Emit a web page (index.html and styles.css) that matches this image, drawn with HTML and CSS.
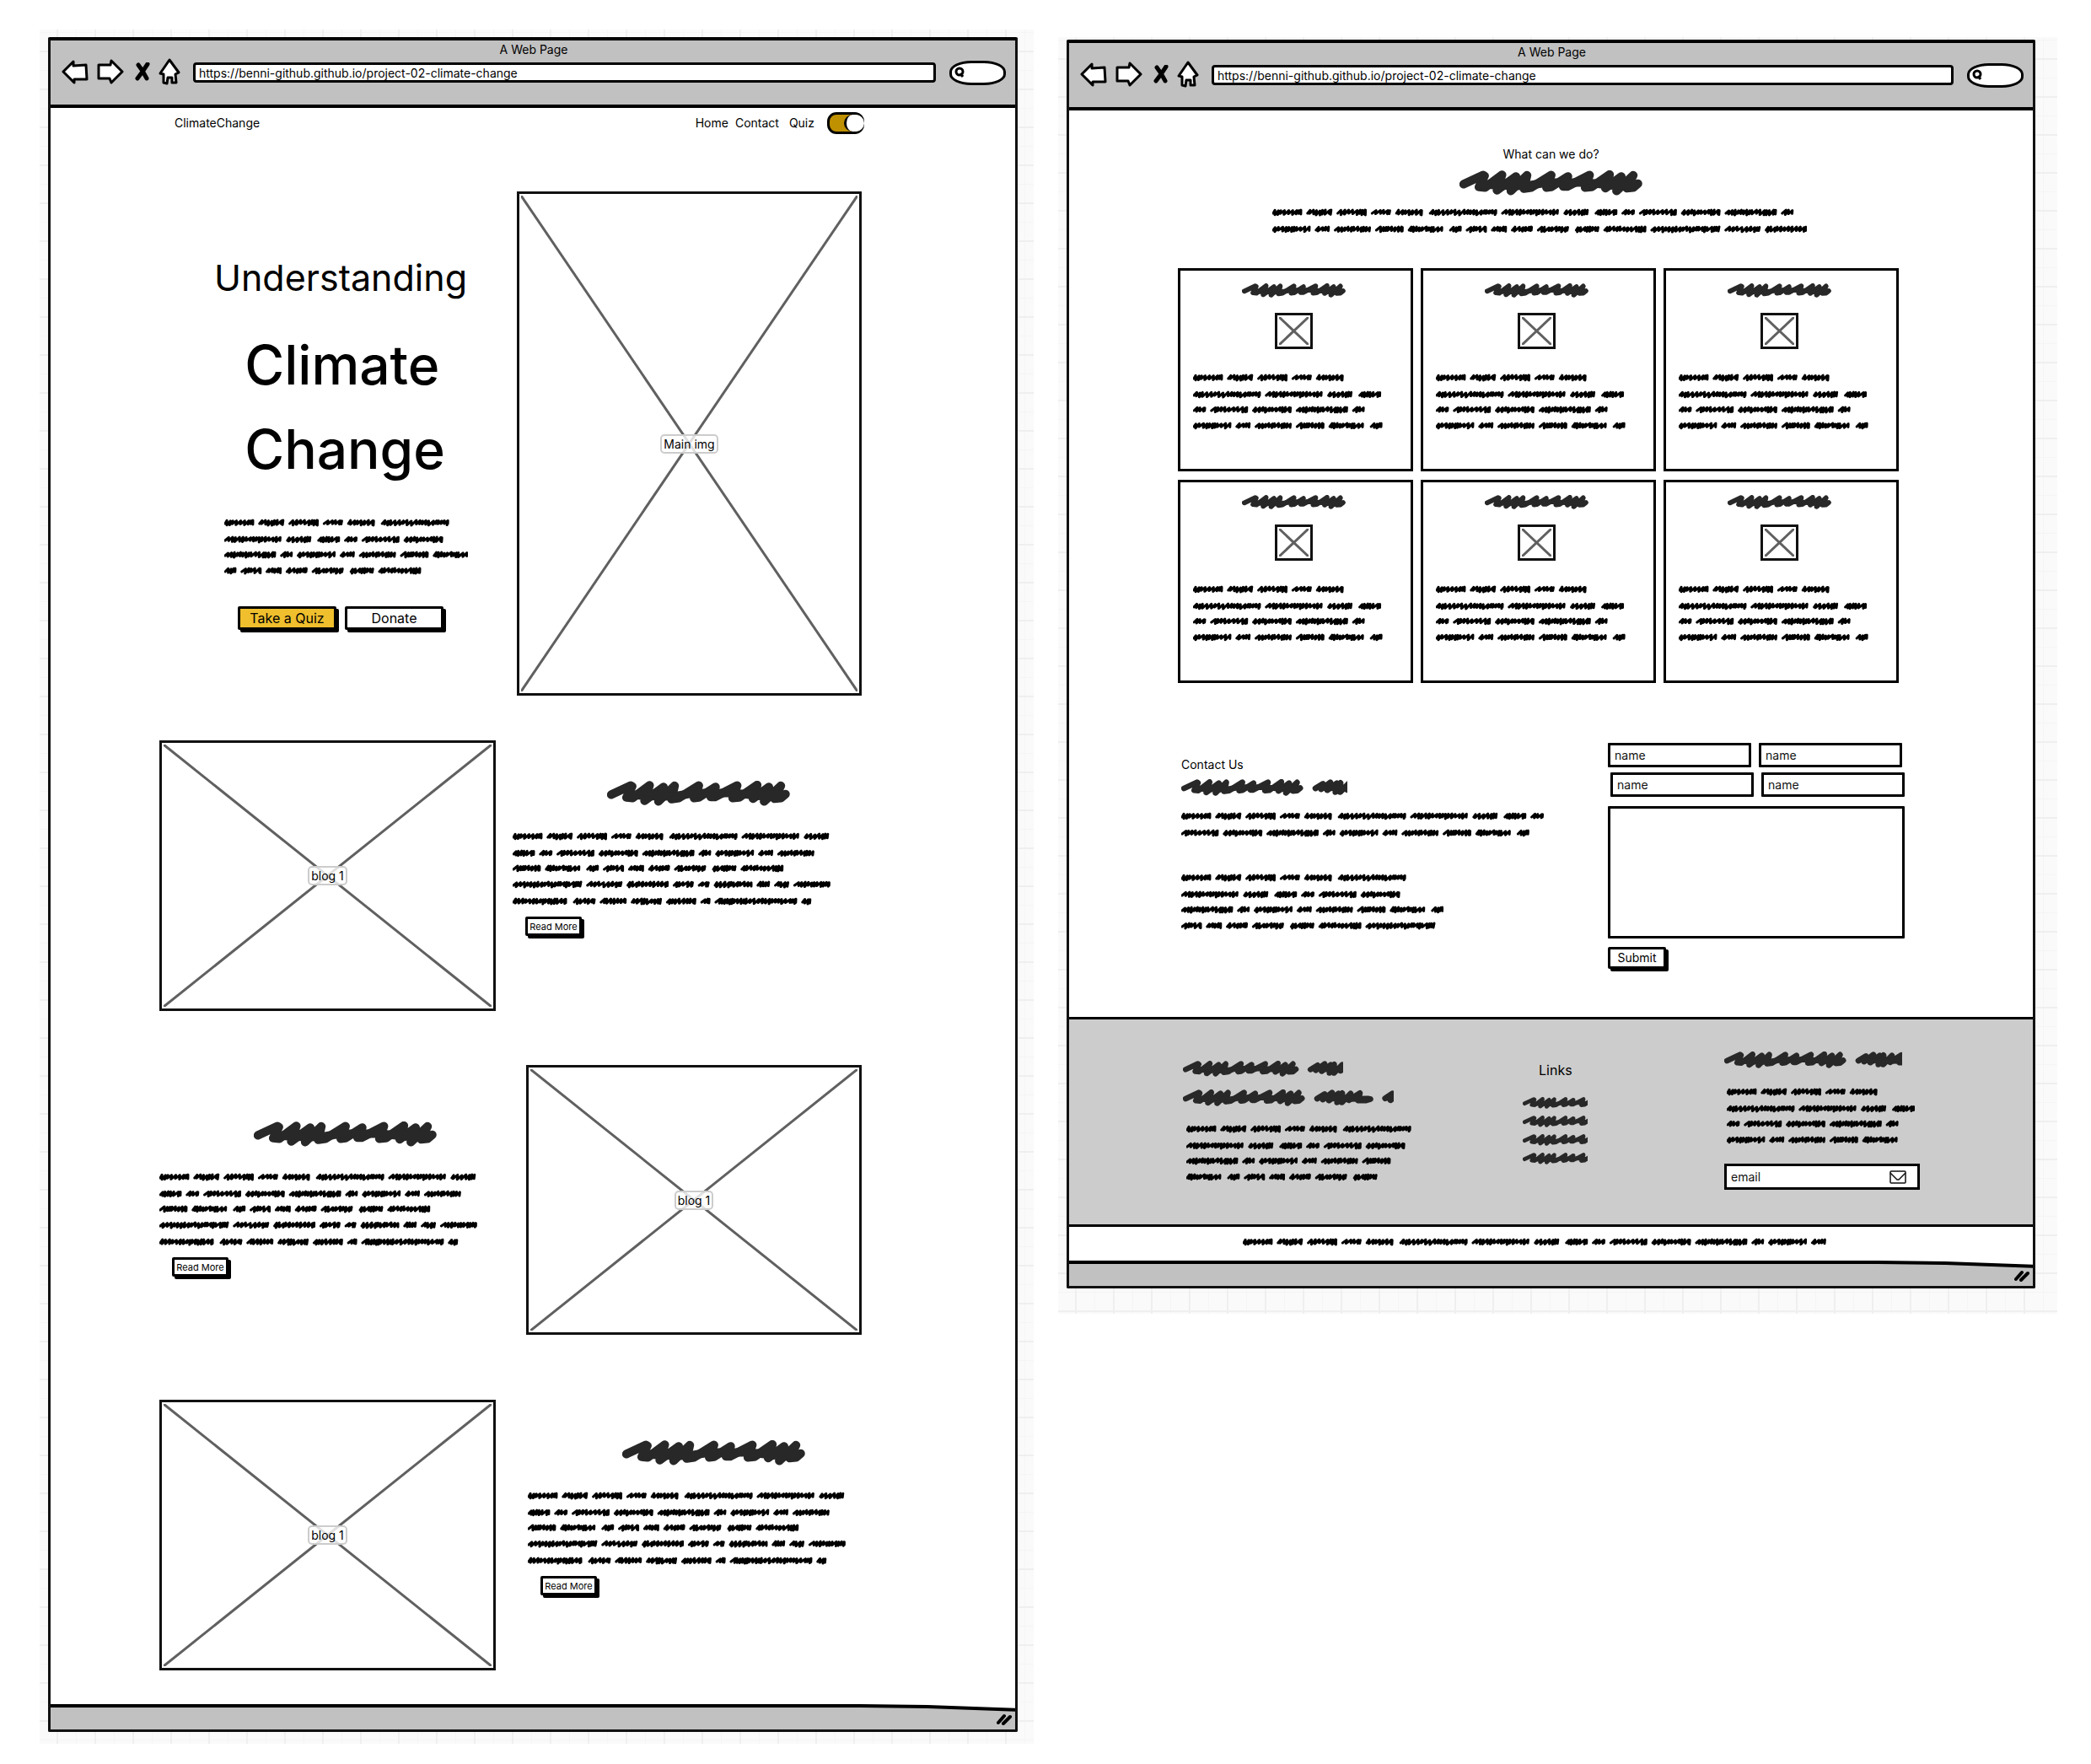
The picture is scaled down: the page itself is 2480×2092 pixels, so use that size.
FILE: index.html
```html
<!DOCTYPE html>
<html lang="en">
<head>
<meta charset="utf-8">
<meta name="viewport" content="width=device-width, initial-scale=1">
<title>Climate Change wireframe</title>
<link rel="stylesheet" href="styles.css">
</head>
<body>
<svg class="defs" aria-hidden="true">
  <defs>
    <g id="heading-ink" fill="none" stroke="#282828" stroke-width="31" stroke-linecap="round" stroke-linejoin="round">
      <path d="M15 50L85 17L90 20L70 60L92 62L153 16L135 72L203 22L185 74L243 18L232 66L258 62L330 17L313 62L330 60L390 22L373 58L388 58L468 17L452 62L475 60L540 15L525 64L582 22L565 74L625 18L602 64L625 62L642 48"/>
      <path d="M724 50L765 25L755 55L805 17L788 60L840 22L832 70L860 20L858 70L905 22L895 58L955 20L945 60L985 60L1012 52"/>
      <path d="M1091 48L1130 22L1120 58L1180 20L1160 60"/>
      <path d="M82 48L130 54L240 56L300 46L340 44L440 44L500 48L540 54L630 50M750 46L800 48L860 52L1000 50M1105 46L1170 48"/>
    </g>
    <symbol id="icon-back" viewBox="0 0 32 30"><path d="M2 15L14 3V8L29 7L30 24H15V28Z" fill="#fff" stroke="#000" stroke-width="3" stroke-linejoin="round"/></symbol>
    <symbol id="icon-forward" viewBox="0 0 32 30"><path d="M30 15L17 28L15 23H2V7H16L17 2Z" fill="#fff" stroke="#000" stroke-width="3" stroke-linejoin="round"/></symbol>
    <symbol id="icon-stop" viewBox="0 0 18 22"><path d="M4 3L9 10L14 19M15 2L9 11L3 19" fill="none" stroke="#000" stroke-width="5" stroke-linejoin="round" stroke-linecap="round"/></symbol>
    <symbol id="icon-home" viewBox="0 0 26 32"><path d="M13 2L24 17L20 19L21 29H16V23H11L10 30L6 29V19L2 18Z" fill="#fff" stroke="#000" stroke-width="3" stroke-linejoin="round"/></symbol>
    <symbol id="icon-search" viewBox="0 0 12 14"><circle cx="6" cy="6" r="4" fill="none" stroke="#000" stroke-width="3"/><path d="M7 8L10 12" stroke="#000" stroke-width="3"/></symbol>
    <symbol id="icon-mail" viewBox="0 0 20 16"><rect x="1" y="1" width="18" height="14" rx="1" fill="#fff" stroke="#111" stroke-width="1.5"/><path d="M1 3L9 11H11L19 3" fill="none" stroke="#111" stroke-width="1.5"/></symbol>
    <symbol id="icon-grip" viewBox="0 0 20 14"><path d="M3 11L10 3M9 12L17 4" stroke="#000" stroke-width="4" stroke-linecap="round"/></symbol>
  </defs>
</svg>

<section class="board board-home">
  <div class="window">
    <header class="chrome">
      <p class="chrome-title">A Web Page</p>
      <div class="chrome-bar">
        <button class="tool" type="button" aria-label="Back"><svg width="32" height="30"><use href="#icon-back"/></svg></button>
        <button class="tool" type="button" aria-label="Forward"><svg width="32" height="30"><use href="#icon-forward"/></svg></button>
        <button class="tool" type="button" aria-label="Stop"><svg width="18" height="22"><use href="#icon-stop"/></svg></button>
        <button class="tool" type="button" aria-label="Home"><svg width="26" height="32"><use href="#icon-home"/></svg></button>
        <input class="address" type="text" aria-label="Address" value="https://benni-github.github.io/project-02-climate-change">
        <label class="search" aria-label="Search"><svg width="12" height="14"><use href="#icon-search"/></svg><input type="search"></label>
      </div>
    </header>

    <nav class="site-nav">
      <a class="brand" href="#">ClimateChange</a>
      <a href="#">Home</a>
      <a href="#contact">Contact</a>
      <a class="quiz-link" href="#">Quiz</a>
      <input class="toggle" type="checkbox" aria-label="Theme" checked>
    </nav>

    <main class="home">
      <section class="hero">
        <div class="hero-text">
          <p class="kicker">Understanding</p>
          <h1>Climate<br>Change</h1>
          <p class="copy" data-lines="6,6,7,7"></p>
          <div class="actions">
            <button class="btn btn-large btn-gold" type="button">Take a Quiz</button>
            <button class="btn btn-large" type="button">Donate</button>
          </div>
        </div>
        <figure class="picture picture-main">
          <svg class="cross"><line x1="0" y1="0" x2="100%" y2="100%"/><line x1="100%" y1="0" x2="0" y2="100%"/></svg>
          <figcaption>Main img</figcaption>
        </figure>
      </section>

      <article class="post">
        <figure class="picture">
          <svg class="cross"><line x1="0" y1="0" x2="100%" y2="100%"/><line x1="100%" y1="0" x2="0" y2="100%"/></svg>
          <figcaption>blog 1</figcaption>
        </figure>
        <div class="post-text">
          <svg class="ink ink-xl" viewBox="0 0 658 91"><use href="#heading-ink"/></svg>
          <p class="copy" data-lines="8,9,9,9,8"></p>
          <button class="btn btn-small" type="button">Read More</button>
        </div>
      </article>

      <article class="post post-flip">
        <div class="post-text">
          <svg class="ink ink-xl" viewBox="0 0 658 91"><use href="#heading-ink"/></svg>
          <p class="copy" data-lines="8,9,9,9,8"></p>
          <button class="btn btn-small" type="button">Read More</button>
        </div>
        <figure class="picture">
          <svg class="cross"><line x1="0" y1="0" x2="100%" y2="100%"/><line x1="100%" y1="0" x2="0" y2="100%"/></svg>
          <figcaption>blog 1</figcaption>
        </figure>
      </article>

      <article class="post post-wide">
        <figure class="picture">
          <svg class="cross"><line x1="0" y1="0" x2="100%" y2="100%"/><line x1="100%" y1="0" x2="0" y2="100%"/></svg>
          <figcaption>blog 1</figcaption>
        </figure>
        <div class="post-text">
          <svg class="ink ink-xl" viewBox="0 0 658 91"><use href="#heading-ink"/></svg>
          <p class="copy" data-lines="8,9,9,9,8"></p>
          <button class="btn btn-small" type="button">Read More</button>
        </div>
      </article>
    </main>

    <div class="status">
      <svg class="status-edge" viewBox="0 0 1144 30" preserveAspectRatio="none"><path d="M-4 2L960 2L1040 3L1148 7V34H-4Z"/></svg>
      <svg class="grip" width="20" height="14"><use href="#icon-grip"/></svg>
    </div>
  </div>
</section>

<section class="board board-action">
  <div class="window">
    <header class="chrome">
      <p class="chrome-title">A Web Page</p>
      <div class="chrome-bar">
        <button class="tool" type="button" aria-label="Back"><svg width="32" height="30"><use href="#icon-back"/></svg></button>
        <button class="tool" type="button" aria-label="Forward"><svg width="32" height="30"><use href="#icon-forward"/></svg></button>
        <button class="tool" type="button" aria-label="Stop"><svg width="18" height="22"><use href="#icon-stop"/></svg></button>
        <button class="tool" type="button" aria-label="Home"><svg width="26" height="32"><use href="#icon-home"/></svg></button>
        <input class="address" type="text" aria-label="Address" value="https://benni-github.github.io/project-02-climate-change">
        <label class="search" aria-label="Search"><svg width="12" height="14"><use href="#icon-search"/></svg><input type="search"></label>
      </div>
    </header>

    <main class="action">
      <section class="intro">
        <h2 class="label">What can we do?</h2>
        <svg class="ink ink-xl" viewBox="0 0 658 91"><use href="#heading-ink"/></svg>
        <p class="copy" data-lines="14,15"></p>
      </section>

      <section class="cards">
        <article class="card"><svg class="ink ink-s" viewBox="0 0 658 91"><use href="#heading-ink"/></svg><div class="thumb"><svg class="cross"><line x1="0" y1="0" x2="100%" y2="100%"/><line x1="100%" y1="0" x2="0" y2="100%"/></svg></div><p class="copy" data-lines="5,4,5,6"></p></article>
        <article class="card"><svg class="ink ink-s" viewBox="0 0 658 91"><use href="#heading-ink"/></svg><div class="thumb"><svg class="cross"><line x1="0" y1="0" x2="100%" y2="100%"/><line x1="100%" y1="0" x2="0" y2="100%"/></svg></div><p class="copy" data-lines="5,4,5,6"></p></article>
        <article class="card"><svg class="ink ink-s" viewBox="0 0 658 91"><use href="#heading-ink"/></svg><div class="thumb"><svg class="cross"><line x1="0" y1="0" x2="100%" y2="100%"/><line x1="100%" y1="0" x2="0" y2="100%"/></svg></div><p class="copy" data-lines="5,4,5,6"></p></article>
        <article class="card"><svg class="ink ink-s" viewBox="0 0 658 91"><use href="#heading-ink"/></svg><div class="thumb"><svg class="cross"><line x1="0" y1="0" x2="100%" y2="100%"/><line x1="100%" y1="0" x2="0" y2="100%"/></svg></div><p class="copy" data-lines="5,4,5,6"></p></article>
        <article class="card"><svg class="ink ink-s" viewBox="0 0 658 91"><use href="#heading-ink"/></svg><div class="thumb"><svg class="cross"><line x1="0" y1="0" x2="100%" y2="100%"/><line x1="100%" y1="0" x2="0" y2="100%"/></svg></div><p class="copy" data-lines="5,4,5,6"></p></article>
        <article class="card"><svg class="ink ink-s" viewBox="0 0 658 91"><use href="#heading-ink"/></svg><div class="thumb"><svg class="cross"><line x1="0" y1="0" x2="100%" y2="100%"/><line x1="100%" y1="0" x2="0" y2="100%"/></svg></div><p class="copy" data-lines="5,4,5,6"></p></article>
      </section>

      <section class="contact" id="contact">
        <div class="contact-text">
          <h2 class="label">Contact Us</h2>
          <svg class="ink ink-m" viewBox="0 0 897 91"><use href="#heading-ink"/></svg>
          <p class="copy" data-lines="10,10"></p>
          <p class="copy" data-lines="6,6,8,7"></p>
        </div>
        <form class="contact-form">
          <div class="field-row">
            <input class="field" type="text" aria-label="First name" placeholder="name">
            <input class="field" type="text" aria-label="Last name" placeholder="name">
          </div>
          <div class="field-row">
            <input class="field" type="text" aria-label="Middle name" placeholder="name">
            <input class="field" type="text" aria-label="Nickname" placeholder="name">
          </div>
          <textarea class="field message" aria-label="Message"></textarea>
          <button class="btn btn-submit" type="button">Submit</button>
        </form>
      </section>
    </main>

    <footer class="site-footer">
      <div class="about">
        <svg class="ink ink-sm" viewBox="0 0 909 91"><use href="#heading-ink"/></svg>
        <svg class="ink ink-m" viewBox="0 0 1139 91"><use href="#heading-ink"/></svg>
        <p class="copy" data-lines="6,6,6,7"></p>
      </div>
      <nav class="links">
        <h2>Links</h2>
        <ul>
          <li><a href="#" aria-label="Link one"><svg class="ink ink-xs" viewBox="0 0 500 91"><use href="#heading-ink"/></svg></a></li>
          <li><a href="#" aria-label="Link two"><svg class="ink ink-xs" viewBox="0 0 500 91"><use href="#heading-ink"/></svg></a></li>
          <li><a href="#" aria-label="Link three"><svg class="ink ink-xs" viewBox="0 0 500 91"><use href="#heading-ink"/></svg></a></li>
          <li><a href="#" aria-label="Link four"><svg class="ink ink-xs" viewBox="0 0 500 91"><use href="#heading-ink"/></svg></a></li>
        </ul>
      </nav>
      <div class="subscribe">
        <svg class="ink ink-m" viewBox="0 0 962 91"><use href="#heading-ink"/></svg>
        <p class="copy" data-lines="5,4,5,5"></p>
        <label class="email"><input type="email" aria-label="Email" placeholder="email"><svg width="20" height="16"><use href="#icon-mail"/></svg></label>
      </div>
    </footer>
    <div class="legal"><p class="copy" data-lines="16"></p></div>

    <div class="status">
      <svg class="status-edge" viewBox="0 0 1144 30" preserveAspectRatio="none"><path d="M-4 2L960 2L1040 3L1148 7V34H-4Z"/></svg>
      <svg class="grip" width="20" height="14"><use href="#icon-grip"/></svg>
    </div>
  </div>
</section>
<script src="scribble.js"></script>
</body>
</html>
```
FILE: styles.css
```css
* { box-sizing: border-box; }

body {
  margin: 0;
  padding: 35px 40px 24px 47px;
  display: grid;
  grid-template-columns: 1179fr 1185fr;
  column-gap: 29px;
  align-items: start;
  background: #fff;
  color: #000;
  font: 14px/20px Inter, "Noto Sans", sans-serif;
}

h1, h2, p, ul, figure { margin: 0; padding: 0; }
ul { list-style: none; }
a { color: inherit; text-decoration: none; }
svg { display: block; }
button, input, textarea { font: inherit; color: inherit; }
.defs { position: absolute; width: 0; height: 0; }

/* Graph paper behind each window */
.board {
  background-color: #fafafa;
  background-image:
    linear-gradient(#efefef 2px, transparent 2px),
    linear-gradient(90deg, #efefef 2px, transparent 2px),
    linear-gradient(#f5f5f5 1px, transparent 1px),
    linear-gradient(90deg, #f5f5f5 1px, transparent 1px);
  background-size: 45px 45px;
  background-position: 0 25px, 20px 0, 0 3px, 43px 0;
}
.board-home { padding: 9px 19px 14px 10px; }
.board-action { margin-top: 9px; padding: 3px 26px 30px 10px; }

.window {
  border: 3px solid #111;
  border-top: 4px solid #000;
  border-radius: 2px;
  background: #fff;
}

/* Browser chrome */
.chrome {
  padding: 1px 11px 24px 13px;
  border-bottom: 4px solid #000;
  background: #c1c1c1;
}
.chrome-title { text-align: center; }
.chrome-bar { display: flex; align-items: center; height: 31px; }
.tool { flex: none; margin-right: 10px; padding: 0; border: 0; background: none; }
.tool:nth-child(2) { margin-right: 13px; }
.tool:nth-child(4) { margin-right: 15px; }
.address {
  flex: 1;
  min-width: 0;
  height: 24px;
  margin: 3px 16px 0 0;
  padding: 0 4px;
  border: 3px solid #000;
  border-radius: 4px;
  background: #fff;
}
.search {
  display: flex;
  align-items: center;
  width: 67px;
  height: 29px;
  margin-top: 3px;
  padding-left: 3px;
  border: 3px solid #000;
  border-radius: 26px / 13px;
  background: #fff;
}
.search input { width: 40px; padding: 0; border: 0; background: none; outline: 0; }

.status { position: relative; height: 30px; }
.status-edge { width: 100%; height: 30px; }
.status-edge path { fill: #c1c1c1; stroke: #000; stroke-width: 4px; vector-effect: non-scaling-stroke; }
.grip { position: absolute; right: 3px; bottom: 5px; }

/* Scribbled headings */
.ink-xl { height: 30px; }
.ink-m { height: 20px; }
.ink-sm { height: 19px; }
.ink-s { height: 17px; }
.ink-xs { height: 14px; }

/* Buttons */
.btn {
  padding: 0;
  border: 3px solid #000;
  border-radius: 2px;
  box-shadow: 3px 3px 0 #000;
  background: #fff;
  line-height: 18px;
}
.btn-large { width: 117px; height: 28px; font-size: 16px; line-height: 20px; }
.btn-gold { background: #efbf2d; }
.btn-small { width: 67px; height: 23px; font-size: 11px; line-height: 16px; }
.btn-submit { width: 69px; height: 26px; }

/* Picture placeholders */
.picture {
  display: grid;
  place-items: center;
  aspect-ratio: 399 / 321;
  padding: 2px;
  border: 3px solid #111;
}
.picture-main { aspect-ratio: 409 / 598; }
.picture > * { grid-area: 1 / 1; }
.cross { width: 100%; height: 100%; }
.cross line { stroke: #606060; stroke-width: 3px; }
.picture figcaption {
  padding: 0 2px;
  border: 2px solid #ccc;
  border-radius: 5px;
  background: rgba(255, 255, 255, .8);
  line-height: 19px;
}

/* Home page */
.site-nav {
  display: flex;
  align-items: center;
  gap: 8px;
  height: 36px;
  padding: 0 179px 0 147px;
}
.brand { margin-right: auto; }
.quiz-link { margin: 0 7px 0 4px; }
.toggle {
  appearance: none;
  width: 44px;
  height: 26px;
  margin: 0;
  border: 3px solid #000;
  border-radius: 11px;
  background: #bf9000;
}
.toggle::before {
  content: "";
  display: block;
  width: 21px;
  height: 20px;
  margin-left: 17px;
  border-left: 3px solid #000;
  border-radius: 10px;
  background: #fff;
}

.home { padding: 63px 182px 40px 129px; }
.hero { display: grid; grid-template-columns: 424fr 409fr; margin-bottom: 53px; }
.hero-text {
  display: flex;
  flex-direction: column;
  align-items: center;
  padding: 76px 0 0 6px;
}
.kicker { margin-bottom: 28px; font-size: 43px; line-height: 52px; }
h1 { margin-left: 10px; font-size: 64px; line-height: 100px; font-weight: 500; }
.hero .copy { margin: 31px 0 36px 13px; }
.actions { display: flex; gap: 10px; }

.post { display: grid; grid-template-columns: 399fr 434fr; margin-bottom: 64px; }
.post-text { padding: 48px 0 0 20px; }
.post .ink { margin: 0 0 30px 112px; }
.post .btn { display: block; margin: 12px 0 0 15px; }
.post-flip { grid-template-columns: 435fr 398fr; margin-bottom: 77px; }
.post-flip .post-text { padding: 67px 0 0; }
.post-wide { margin-bottom: 0; }
.post-wide .post-text { padding-left: 38px; }

/* Action page */
.action { padding: 42px 152px 57px 129px; }
.label { font-size: 14px; line-height: 20px; font-weight: 400; }
.intro {
  display: flex;
  flex-direction: column;
  align-items: center;
  margin: 0 0 40px 23px;
}
.intro .ink { margin: 9px 0 14px; }
.intro .copy { margin-right: 28px; }

.cards {
  display: grid;
  grid-template-columns: repeat(3, 1fr);
  gap: 10px 9px;
  margin: 0 7px 71px 0;
}
.card { padding: 15px 19px 45px 15px; border: 3px solid #000; }
.card .ink { margin: 0 auto; }
.thumb {
  width: 45px;
  height: 43px;
  margin: 18px auto 28px;
  padding: 2px;
  border: 3px solid #111;
}

.contact { display: grid; grid-template-columns: 510fr 352fr; }
.contact-text { padding: 16px 0 0 4px; }
.contact-text .ink { margin: 7px 0 18px; }
.contact-text .copy + .copy { margin-top: 41px; }
.field-row { display: flex; gap: 9px; margin: 0 3px 6px 0; }
.field-row + .field-row { margin: 0 0 11px 3px; }
.field {
  display: block;
  flex: 1;
  min-width: 0;
  width: 100%;
  height: 29px;
  padding: 0 5px;
  border: 3px solid #000;
  border-radius: 1px;
  background: #fff;
}
.field::placeholder, .email input::placeholder { color: #111; opacity: 1; }
.message { height: 157px; margin-bottom: 10px; resize: none; }

.site-footer {
  display: grid;
  grid-template-columns: 403fr 239fr 232fr;
  padding: 0 134px 41px 135px;
  border-top: 3px solid #000;
  border-bottom: 3px solid #000;
  background: #ccc;
}
.site-footer > * { min-width: 0; }
.about { padding-top: 49px; }
.about .ink { margin-bottom: 15px; }
.about .copy { padding: 6px 0 0 4px; }
.links { padding-top: 48px; }
.links h2 { margin: 0 0 20px 19px; font-size: 16px; line-height: 24px; font-weight: 400; }
.links li { margin-bottom: 8px; }
.subscribe { padding-top: 38px; }
.subscribe .copy { margin: 22px 0 22px 3px; }
.email {
  display: flex;
  align-items: center;
  height: 31px;
  padding: 0 13px 0 5px;
  border: 3px solid #000;
  background: #fff;
}
.email input { flex: 1; min-width: 0; padding: 0; border: 0; background: none; outline: 0; }
.legal { display: flex; justify-content: center; padding: 12px 40px 16px 0; }
```
FILE: scribble.js
```js
// Each entry is one scribbled word: its width, negative when a wide space comes before it.
const WORDS = [35, 30, 35, 23, 32, -80, 68, 29, -26, 15, 44, 46, 61, 14, 45, 17, 43, 33, 41, -14,
  24, 18, 25, 37, -28, 50, 82, 42, 49, 24, 13, 45, 15, 17, 43, 64, -26, 31, 36, 35, 11, 97, 11];
const LINE_Y = [6, 26, 44, 63, 83];
const NS = 'http://www.w3.org/2000/svg';

function wordPath(x0, cy, width, seed) {
  let s = seed * 7919 + 17;
  const rand = () => (s = (s * 1103515245 + 12345) % 2147483648) / 2147483648;
  const end = x0 + width - 1;
  let x = x0 + 1;
  let d = `M${x} ${cy + 1}`;
  while (x < end) {
    const top = Math.min(end, x + 2 + rand() * 3);
    const foot = Math.max(x, top - rand());
    d += `L${top.toFixed(1)} ${(cy - 2 - rand()).toFixed(1)}L${foot.toFixed(1)} ${(cy + 1 + rand() * 2).toFixed(1)}`;
    x = foot + 1;
    if (top >= end) break;
  }
  return d;
}

document.querySelectorAll('.copy').forEach((el) => {
  const lines = el.dataset.lines.split(',').map(Number);
  let index = 0;
  let widest = 0;
  let d = '';
  lines.forEach((count, row) => {
    let x = 0;
    for (let n = 0; n < count; n += 1, index += 1) {
      const width = Math.abs(WORDS[index]);
      if (n > 0) x += WORDS[index] < 0 ? 8 : 5.8;
      d += wordPath(x, LINE_Y[row], width, index + 1);
      x += width;
    }
    widest = Math.max(widest, x);
  });
  const svg = document.createElementNS(NS, 'svg');
  svg.setAttribute('width', Math.ceil(widest));
  svg.setAttribute('height', LINE_Y[lines.length - 1] + 6);
  const path = document.createElementNS(NS, 'path');
  path.setAttribute('d', d);
  path.setAttribute('fill', 'none');
  path.setAttribute('stroke', '#000');
  path.setAttribute('stroke-width', '3');
  path.setAttribute('stroke-linecap', 'round');
  path.setAttribute('stroke-linejoin', 'round');
  svg.append(path);
  el.append(svg);
});
```
